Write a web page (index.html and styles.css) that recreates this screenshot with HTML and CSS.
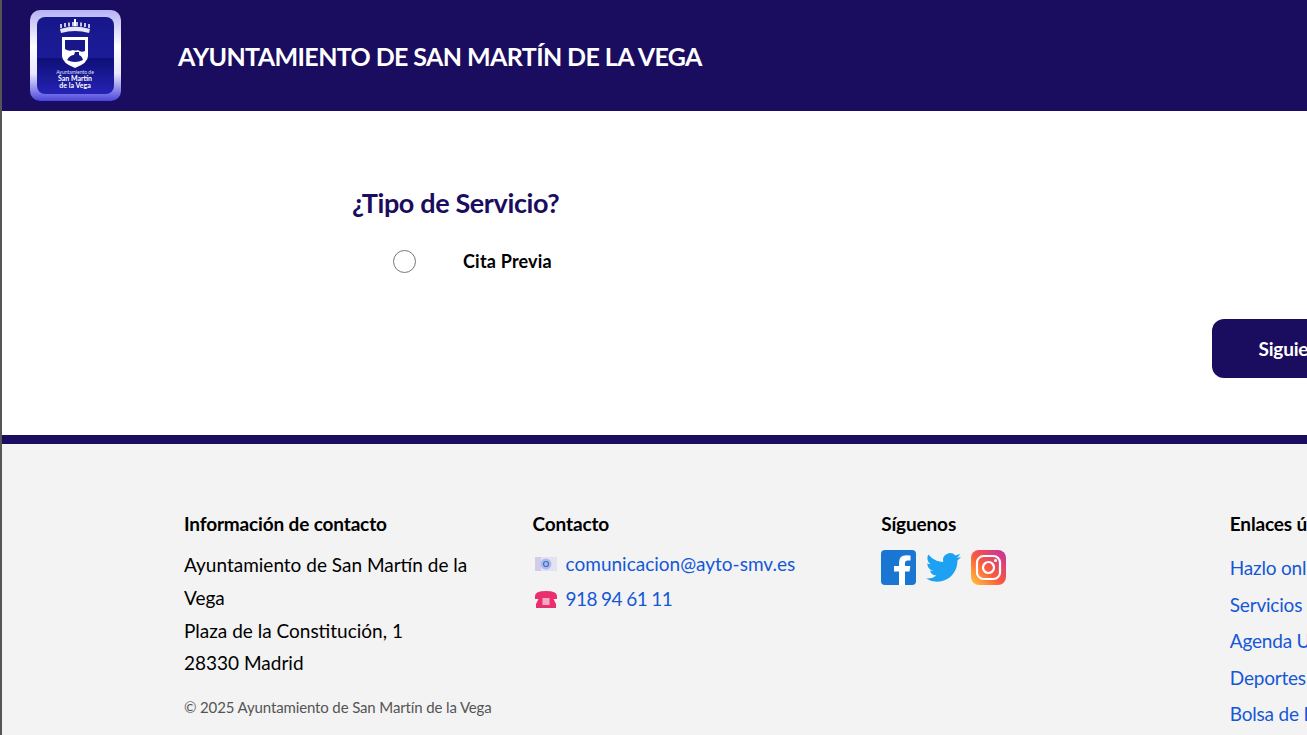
FILE: index.html
```html
<!DOCTYPE html>
<html lang="es">
<head>
    <meta charset="UTF-8">
    <meta name="viewport" content="width=device-width, initial-scale=1.0">
    <title>Ayuntamiento de San Martín de la Vega</title>
    <link rel="stylesheet" href="styles.css">
</head>
<body>
    <div class="page">
        <header class="site-header">
            <svg class="logo" width="91" height="91" viewBox="0 0 91 91">
                <defs>
                    <linearGradient id="frame" x1="0" y1="0" x2="0" y2="1">
                        <stop offset="0" stop-color="#b5b2f4"/>
                        <stop offset="0.4" stop-color="#ffffff"/>
                        <stop offset="0.7" stop-color="#e8e8ff"/>
                        <stop offset="1" stop-color="#4a45dc"/>
                    </linearGradient>
                    <linearGradient id="tile" x1="0" y1="0" x2="0" y2="1">
                        <stop offset="0" stop-color="#17178a"/>
                        <stop offset="0.53" stop-color="#1b1b98"/>
                        <stop offset="0.54" stop-color="#0f0f78"/>
                        <stop offset="1" stop-color="#2523b4"/>
                    </linearGradient>
                </defs>
                <rect x="0" y="0" width="91" height="91" rx="10" fill="url(#frame)"/>
                <rect x="7" y="7" width="77" height="77" rx="8" fill="url(#tile)"/>
                <g fill="none" stroke="#fff" stroke-width="1.500">
                    <path d="M31 14v4M35 13v4M39 12.500v4M43 12v4M47 12v4M51 12.500v4M55 13v4M59 14v4"/>
                    <path d="M45 9v7" stroke-width="2"/>
                </g>
                <path d="M30 19q15-5 30 0l-1 4q-14-4-28 0z" fill="#e6e6ff"/>
                <path d="M32 27h26v19q0 7-13 12q-13-5-13-12z" fill="#fff"/>
                <path d="M35 30h20v11q-4 2-7-1-3 1-5 0-4 2-8-1z" fill="#17178a"/>
                <path d="M37 50q3-5 7-5l1-3h4v3q3 1 4 5q-8 4-16 0z" fill="#17178a"/>
                <text class="logo-text" x="45" y="64">Ayuntamiento de</text>
                <text class="logo-text logo-text-big" x="45" y="71">San Martín</text>
                <text class="logo-text logo-text-big" x="45" y="78">de la Vega</text>
            </svg>
            <h1 class="site-title">AYUNTAMIENTO DE SAN MARTÍN DE LA VEGA</h1>
        </header>

        <main class="content">
            <h2 class="form-title">¿Tipo de Servicio?</h2>
            <label class="option">
                <span class="radio"></span>
                <span class="option-label">Cita Previa</span>
            </label>
            <div class="actions">
                <button class="button">Siguiente</button>
            </div>
        </main>

        <footer class="site-footer">
            <div class="footer-cols">
                <div class="footer-col">
                    <h3>Información de contacto</h3>
                    <p class="address">Ayuntamiento de San Martín de la Vega<br>Plaza de la Constitución, 1<br>28330 Madrid</p>
                    <p class="copyright">© 2025 Ayuntamiento de San Martín de la Vega</p>
                </div>
                <div class="footer-col">
                    <h3>Contacto</h3>
                    <div class="contact-row">
                        <svg width="22" height="16" viewBox="0 0 22 16">
                            <rect x="0" y="1" width="22" height="14" fill="#e6e0f4"/>
                            <rect x="0" y="1" width="6" height="14" fill="#d3cbe8"/>
                            <circle cx="11" cy="8" r="5.500" fill="#a9bdea"/>
                            <circle cx="11" cy="8" r="2.500" fill="none" stroke="#3f68c8" stroke-width="1.200"/>
                        </svg>
                        <a href="#">comunicacion@ayto-smv.es</a>
                    </div>
                    <div class="contact-row">
                        <svg width="22" height="19" viewBox="0 0 22 19">
                            <path d="M0 7q0-5 11-5t11 5v3h-6V7H6v3H0z" fill="#e8306f"/>
                            <path d="M5 7h12l4 8v4H1v-4z" fill="#e8306f"/>
                            <rect x="7.500" y="9" width="7" height="7" fill="#f7a8c4"/>
                        </svg>
                        <a class="phone" href="#">918 94 61 11</a>
                    </div>
                </div>
                <div class="footer-col">
                    <h3>Síguenos</h3>
                    <div class="social">
                        <svg width="35" height="35" viewBox="0 0 35 35">
                            <rect width="35" height="35" rx="4" fill="#1976d2"/>
                            <path d="M24 35V21.500h4.500l.8-5.500H24v-3q0-2.600 2.700-2.600h2.800V5.500q-2-.3-4-.3-7.500 0-7.500 7.300V16h-5v5.500h5V35z" fill="#fff"/>
                        </svg>
                        <svg width="35" height="35" viewBox="0 0 24 24">
                            <path d="M23.953 4.570a10 10 0 01-2.825.775 4.958 4.958 0 002.163-2.723c-.951.555-2.005.959-3.127 1.184a4.920 4.920 0 00-8.384 4.482C7.690 8.095 4.067 6.130 1.640 3.162a4.822 4.822 0 00-.666 2.475c0 1.710.870 3.213 2.188 4.096a4.904 4.904 0 01-2.228-.616v.060a4.923 4.923 0 003.946 4.827 4.996 4.996 0 01-2.212.085 4.936 4.936 0 004.604 3.417 9.867 9.867 0 01-6.102 2.105c-.390 0-.779-.023-1.170-.067a13.995 13.995 0 007.557 2.209c9.053 0 13.998-7.496 13.998-13.985 0-.210 0-.420-.015-.630A9.935 9.935 0 0024 4.590z" fill="#1da1f2"/>
                        </svg>
                        <svg width="35" height="35" viewBox="0 0 35 35">
                            <defs>
                                <linearGradient id="insta" x1="0" y1="1" x2="1" y2="0">
                                    <stop offset="0" stop-color="#ffc93a"/>
                                    <stop offset="0.45" stop-color="#fb5a3c"/>
                                    <stop offset="1" stop-color="#c42fa5"/>
                                </linearGradient>
                            </defs>
                            <rect width="35" height="35" rx="8" fill="url(#insta)"/>
                            <rect x="6" y="6" width="23" height="23" rx="6.500" fill="none" stroke="#fff" stroke-width="2.200"/>
                            <circle cx="17.500" cy="17.500" r="5.500" fill="none" stroke="#fff" stroke-width="2.200"/>
                            <circle cx="24.500" cy="10.500" r="1.500" fill="#fff"/>
                        </svg>
                    </div>
                </div>
                <div class="footer-col">
                    <h3>Enlaces útiles</h3>
                    <ul class="links">
                        <li><a href="#">Hazlo online</a></li>
                        <li><a href="#">Servicios Sociales</a></li>
                        <li><a href="#">Agenda Urbana</a></li>
                        <li><a href="#">Deportes</a></li>
                        <li><a href="#">Bolsa de Empleo</a></li>
                    </ul>
                </div>
            </div>
        </footer>
    </div>
</body>
</html>
```

FILE: styles.css
```css
html, body {
    margin: 0;
    padding: 0;
    height: 100%;
    overflow: hidden;
    background-color: #fff;
    font-family: 'Lato', 'Open Sans', sans-serif;
    color: #000;
}

.page {
    width: 1640px;
    height: 735px;
    box-sizing: border-box;
    border-left: 2px solid #555;
    overflow: hidden;
}

.site-header {
    height: 111px;
    background-color: #1a0c5e;
    display: flex;
    align-items: center;
    padding-left: 28px;
}

.logo {
    flex: none;
    margin-top: -1px;
}

.logo-text {
    font-size: 5px;
    fill: #dfe0ff;
    text-anchor: middle;
}

.logo-text-big {
    font-size: 7px;
    font-weight: bold;
    fill: #fff;
}

.site-title {
    margin: 0 0 0 57px;
    color: #fff;
    font-size: 25px;
    font-weight: bold;
    letter-spacing: -0.6px;
    white-space: nowrap;
}

.content {
    height: 324px;
    box-sizing: border-box;
    padding-top: 76px;
    padding-left: 350px;
}

.form-title {
    margin: 0;
    font-size: 27px;
    line-height: 32px;
    font-weight: bold;
    color: #1a0c5e;
    letter-spacing: -0.37px;
}

.option {
    display: flex;
    align-items: center;
    margin-top: 27px;
    margin-left: 41px;
    height: 30px;
}

.radio {
    width: 21px;
    height: 21px;
    margin-top: 1px;
    border: 1px solid #767676;
    border-radius: 50%;
    background: #fff;
}

.option-label {
    margin-left: 47px;
    font-size: 18px;
    font-weight: bold;
    letter-spacing: 0.2px;
}

.actions {
    display: flex;
    margin-top: 43px;
    margin-left: 860px;
}

.button {
    width: 170px;
    height: 59px;
    background-color: #1a0c5e;
    border: none;
    border-radius: 12px;
    color: #fff;
    font-family: inherit;
    font-size: 19px;
    font-weight: bold;
    letter-spacing: -0.2px;
}

.site-footer {
    height: 300px;
    box-sizing: border-box;
    background-color: #f3f3f3;
    border-top: 9px solid #1a0c5e;
    padding-top: 67px;
    padding-left: 182px;
}

.footer-cols {
    display: grid;
    grid-template-columns: repeat(4, 348.600px);
}

.footer-col {
    padding-right: 60px;
}

.footer-col h3 {
    margin: 0;
    font-size: 19px;
    line-height: 25px;
    font-weight: bold;
    letter-spacing: -0.15px;
    white-space: nowrap;
}

.address {
    margin: 13px 0 0;
    font-size: 19px;
    line-height: 32.800px;
}

.copyright {
    margin: 17px 0 0;
    font-size: 15px;
    line-height: 20px;
    color: #555;
    letter-spacing: -0.13px;
    white-space: nowrap;
}

.contact-row {
    display: flex;
    align-items: center;
    gap: 9px;
    height: 35px;
    font-size: 19px;
}

.contact-row:first-of-type {
    margin-top: 10px;
}

.contact-row svg {
    flex: none;
    margin-left: 2px;
}

a {
    color: #1558d6;
    text-decoration: none;
}

.phone {
    letter-spacing: -0.6px;
}

.social {
    display: flex;
    gap: 10px;
    margin-top: 14px;
}

.links {
    list-style: none;
    margin: 14px 0 0;
    padding: 0;
    font-size: 19px;
    line-height: 36.500px;
    letter-spacing: -0.2px;
    white-space: nowrap;
}
```
